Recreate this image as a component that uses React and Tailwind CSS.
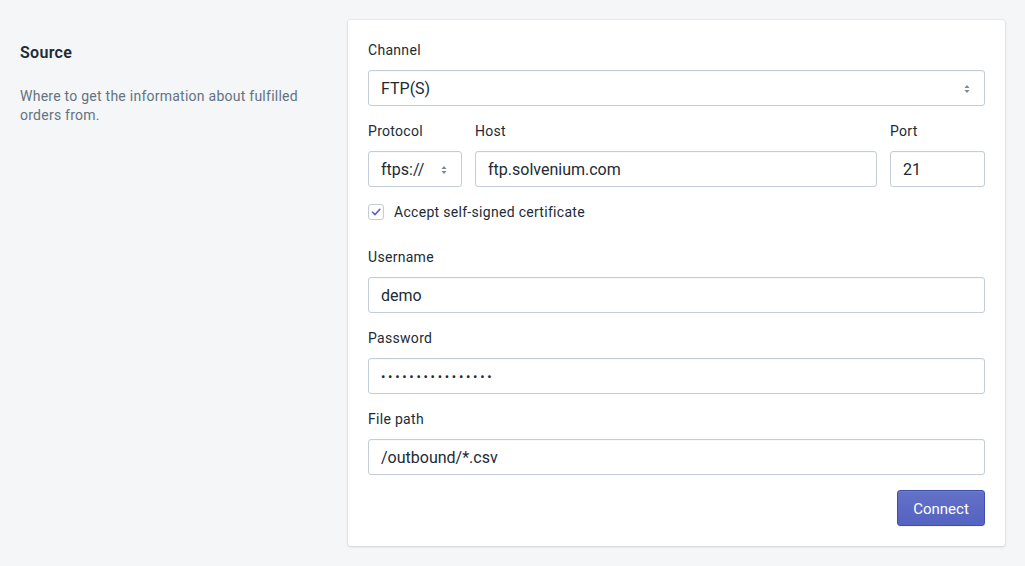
import React from "react";

function Arrows() {
  return (
    <svg width="10" height="12" viewBox="0 0 10 12" className="shrink-0">
      <path d="M5 2 L7.5 5 L2.5 5 Z" fill="#7a8794" />
      <path d="M5 10 L7.5 7 L2.5 7 Z" fill="#7a8794" />
    </svg>
  );
}

function Label({ children }) {
  return <div className="text-[14px] leading-5 tracking-[0.3px] text-[#212b36]">{children}</div>;
}

const boxCls =
  "h-9 bg-white border border-[#c4cdd5] rounded-[3px] shadow-[inset_0_1px_0_0_rgba(99,115,129,0.05)] flex items-center px-3 pt-[2px] text-[16px] text-[#212b36]";

function Field({ label, value, className = "" }) {
  return (
    <div className={className}>
      <Label>{label}</Label>
      <div className={"mt-[10px] " + boxCls}>{value}</div>
    </div>
  );
}

export default function App() {
  return (
    <div
      className="min-h-[566px] bg-[#f4f6f8] px-5 pt-5 pb-5"
      style={{ fontFamily: "Roboto, 'Liberation Sans', sans-serif" }}
    >
      <div className="flex gap-5">
        <div className="w-[308px] shrink-0 pt-[21px]">
          <div className="text-[16px] leading-6 font-semibold tracking-[0.3px] text-[#212b36]">Source</div>
          <div className="mt-[22px] text-[14px] leading-[19px] tracking-[0.25px] text-[#637381]">
            Where to get the information about fulfilled orders from.
          </div>
        </div>
        <div className="flex-1 bg-white rounded-[3px] shadow-[0_0_0_1px_rgba(63,63,68,0.05),0_1px_3px_0_rgba(63,63,68,0.15)] p-5">
          <div>
            <Label>Channel</Label>
            <div className={"mt-[10px] justify-between " + boxCls}>
              <span>FTP(S)</span>
              <Arrows />
            </div>
          </div>

          <div className="mt-[15px] flex gap-[13px]">
            <div className="w-[94px] shrink-0">
              <Label>Protocol</Label>
              <div className={"mt-[10px] justify-between " + boxCls}>
                <span>ftps://</span>
                <Arrows />
              </div>
            </div>
            <Field label="Host" value="ftp.solvenium.com" className="flex-1" />
            <Field label="Port" value="21" className="w-[95px] shrink-0" />
          </div>

          <div className="mt-[15px] flex items-center h-5 gap-[10px]">
            <div className="w-4 h-4 rounded-[3px] border border-[#c4cdd5] bg-white flex items-center justify-center">
              <svg width="12" height="12" viewBox="0 0 12 12">
                <path d="M2.5 6.2 L5 8.6 L9.8 3.4" fill="none" stroke="#5c6ac4" strokeWidth="1.6" strokeLinecap="round" strokeLinejoin="round" />
              </svg>
            </div>
            <span className="text-[14px] leading-5 tracking-[0.3px] text-[#212b36]">Accept self-signed certificate</span>
          </div>

          <Field label="Username" value="demo" className="mt-[25px]" />
          <Field
            label="Password"
            value={<span className="text-[13px] tracking-[2.7px]">••••••••••••••••</span>}
            className="mt-[15px]"
          />
          <Field label="File path" value="/outbound/*.csv" className="mt-[15px]" />

          <div className="mt-[15px] flex justify-end">
            <button className="h-9 w-[88px] pt-[3px] rounded-[3px] border border-[#3f4eae] bg-gradient-to-b from-[#6371c7] to-[#5563c1] text-white text-[15px] shadow-[inset_0_1px_0_0_#6f7bcb,0_1px_0_0_rgba(22,29,37,0.05)]">
              Connect
            </button>
          </div>
        </div>
      </div>
    </div>
  );
}
